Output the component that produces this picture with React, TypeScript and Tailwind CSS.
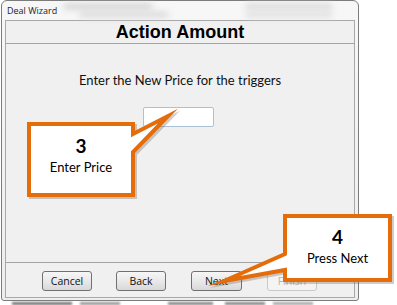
const orange = '#e46c0a';

const WizardButton = ({ label, disabled = false, className = '' }: { label: string; disabled?: boolean; className?: string }) => (
  <div
    className={
      'h-[20px] flex items-center justify-center rounded-[3px] border text-[10.5px] leading-none ' +
      (disabled
        ? 'border-[#c9c9c9] bg-[#f4f4f4] text-[#b4b4b4] '
        : 'border-[#707070] bg-gradient-to-b from-[#f6f6f6] via-[#e9e9e9] to-[#d8d8d8] text-[#111] ') +
      className
    }
    style={{ fontFamily: '"Open Sans", sans-serif' }}
  >
    {label}
  </div>
);

const Callouts = () => (
  <>
    <svg className="absolute inset-0 pointer-events-none" width="397" height="305" viewBox="0 0 397 305">
      {/* soft shadow under both callouts */}
      <g transform="translate(2 2)" opacity="0.3">
        <polygon points="29,124 133,124 133,134 168,116 133,152 133,195 29,195" fill="#6b5a4a" stroke="#6b5a4a" strokeWidth="4" strokeMiterlimit="10" />
        <polygon points="285,216 390,216 390,280 285,280 285,270 224,281 285,254" fill="#6b5a4a" stroke="#6b5a4a" strokeWidth="4" strokeMiterlimit="10" />
      </g>
      <polygon points="29,124 133,124 133,134 168,116 133,152 133,195 29,195" fill="#fff" stroke={orange} strokeWidth="4" strokeMiterlimit="10" />
      <polygon points="285,216 390,216 390,280 285,280 285,270 224,281 285,254" fill="#fff" stroke={orange} strokeWidth="4" strokeMiterlimit="10" />
    </svg>
    <div className="absolute left-[31px] top-[126px] w-[100px] h-[67px] flex flex-col items-center pt-[9px] text-black" style={{ fontFamily: 'Lato, sans-serif' }}>
      <span className="text-[19px] font-bold leading-[22px]">3</span>
      <span className="text-[13px] leading-[18px] mt-[1px]">Enter Price</span>
    </div>
    <div className="absolute left-[287px] top-[218px] w-[101px] h-[60px] flex flex-col items-center pt-[8px] text-black" style={{ fontFamily: 'Lato, sans-serif' }}>
      <span className="text-[19px] font-bold leading-[22px]">4</span>
      <span className="text-[13px] leading-[18px] mt-[1px]">Press Next</span>
    </div>
  </>
);

export default function App() {
  return (
    <div className="relative w-[397px] h-[305px] bg-white overflow-hidden">
      <div className="relative ml-[1px] w-[358px] h-[301px] rounded-t-[6px] rounded-b-[3px] border border-[#7c7c7c] bg-gradient-to-b from-[#f7f7f7] to-[#eeeeee] flex flex-col">
        <div className="relative h-[19px] shrink-0">
          <span className="absolute left-[5px] top-[4px] text-[9px] leading-[12px] text-[#1a1a1a]" style={{ fontFamily: '"Open Sans", sans-serif' }}>
            Deal Wizard
          </span>
          {/* blurred glass behind the title bar */}
          <div className="absolute left-[62px] top-[3px] w-[88px] h-[5px] bg-[#cfcfcf] blur-[3px]" />
          <div className="absolute left-[78px] top-[11px] w-[88px] h-[5px] bg-[#d6d6d6] blur-[3px]" />
          <div className="absolute left-[244px] top-[3px] w-[86px] h-[5px] bg-[#d6d6d6] blur-[3px]" />
          <div className="absolute left-[244px] top-[11px] w-[86px] h-[5px] bg-[#dcdcdc] blur-[3px]" />
        </div>
        <div className="mx-[3px] mb-[2px] flex-1 border border-[#a8a8a8] bg-[#f0f0f0] flex flex-col">
          <div className="h-[23px] shrink-0 border-b border-[#a3a3a3] flex items-center justify-center">
            <span className="text-[18px] font-bold leading-none text-black" style={{ fontFamily: '"Liberation Sans", Arial, sans-serif' }}>
              Action Amount
            </span>
          </div>
          <div className="flex-1 flex flex-col">
            <p className="mt-[28px] text-center text-[13px] leading-[16px] text-[#111]" style={{ fontFamily: 'Lato, sans-serif' }}>
              Enter the New Price for the triggers
            </p>
            <div className="mt-[19px] ml-[137px] w-[71px] h-[20px] border border-[#abc1d8] rounded-[2px] bg-white" />
          </div>
          <div className="h-[35px] shrink-0 border-t border-[#a3a3a3] flex items-start pt-[8px] pl-[36px]">
            <WizardButton label="Cancel" className="w-[50px]" />
            <WizardButton label="Back" className="w-[50px] ml-[24px]" />
            <WizardButton label="Next" className="w-[51px] ml-[25px]" />
            <WizardButton label="Finish" disabled className="w-[50px] ml-[25px]" />
          </div>
        </div>
      </div>
      <div className="flex gap-[8px] pl-[12px] mt-[1px]">
        <div className="w-[60px] h-[3px] bg-[#777] blur-[1px]" />
        <div className="w-[40px] h-[3px] bg-[#999] blur-[1px]" />
        <div className="w-[45px] h-[3px] bg-[#888] blur-[1px] ml-[40px]" />
        <div className="w-[40px] h-[3px] bg-[#888] blur-[1px] ml-[4px]" />
        <div className="w-[40px] h-[3px] bg-[#aaa] blur-[1px]" />
      </div>
      <Callouts />
    </div>
  );
}
